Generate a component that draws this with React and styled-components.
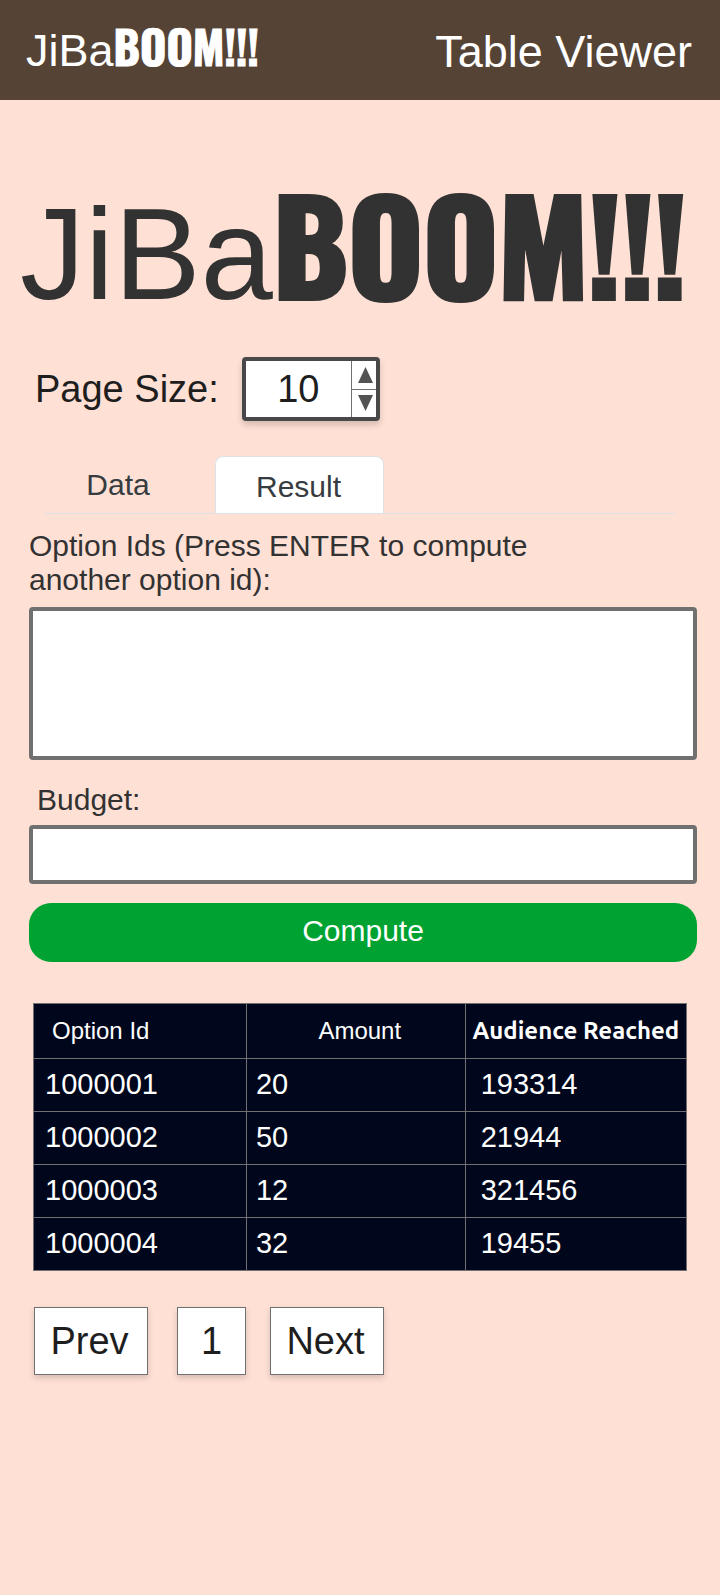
import React, { useState } from "react";
import styled, { createGlobalStyle } from "styled-components";

const GlobalStyle = createGlobalStyle`
  *, *::before, *::after { box-sizing: border-box; }
  body {
    margin: 0;
    background: #fee0d5;
    color: #323232;
    font-family: "Liberation Sans", Arial, sans-serif;
  }
  button, input, textarea { font-family: inherit; margin: 0; }
`;

const Page = styled.div`
  min-height: 100vh;
`;

const Header = styled.header`
  display: flex;
  align-items: center;
  justify-content: space-between;
  height: 100px;
  padding: 0 28px 0 26px;
  background: #554436;
  color: #fff;
`;

const HeaderTitle = styled.span`
  font-size: 45px;
  line-height: 48px;
  padding-top: 4px;
`;

const Wordmark = styled.span`
  display: block;
  font-size: ${(p) => p.$size}px;
  line-height: ${(p) => p.$size}px;
  white-space: nowrap;
`;

const Boom = styled.strong`
  font-family: Impact, Oswald, "Liberation Sans", sans-serif;
  font-size: ${(p) => p.$size}px;
  font-weight: 700;
  line-height: 0;
  -webkit-text-stroke: ${(p) => p.$stroke}px currentColor;
`;

const Hero = styled.h1`
  margin: 0;
  padding: 89px 0 0 20px;
  font-weight: 400;
`;

const Main = styled.main`
  padding: 38px 23px 40px 29px;
`;

const PageSize = styled.div`
  display: flex;
  align-items: center;
  gap: 23px;
  padding-left: 6px;
  font-size: 38px;
  color: #1e1e1e;
`;

const Stepper = styled.div`
  display: flex;
  width: 138px;
  height: 64px;
  border: 4px solid #484848;
  border-radius: 4px;
  background: #fff;
  box-shadow: 0 4px 6px rgba(0, 0, 0, 0.16);
`;

const StepperInput = styled.input`
  flex: 1;
  min-width: 0;
  padding: 0;
  border: 0;
  background: transparent;
  color: #1e1e1e;
  font-size: 38px;
  text-align: center;
  appearance: textfield;
  &::-webkit-inner-spin-button { appearance: none; margin: 0; }
`;

const StepperButtons = styled.div`
  display: flex;
  flex-direction: column;
  width: 25px;
  border-left: 1px solid #707070;
`;

const StepButton = styled.button`
  display: flex;
  flex: 1;
  align-items: center;
  justify-content: center;
  padding: 0 0 0 3px;
  border: 0;
  background: transparent;
  & + & { border-top: 1px solid #707070; }
`;

const Tabs = styled.div`
  display: flex;
  height: 58px;
  margin: 35px 22px 0 16px;
  border-bottom: 1px solid #dee2e6;
`;

const Tab = styled.button`
  width: 169px;
  padding: 4px 2px 0 0;
  border: 1px solid ${(p) => (p.$active ? "#dee2e6" : "transparent")};
  border-bottom: 0;
  border-radius: 8px 8px 0 0;
  background: ${(p) => (p.$active ? "#fff" : "transparent")};
  color: #373c41;
  font-size: 30px;
`;

const FirstTab = styled(Tab)`
  width: 170px;
  padding: 0 24px 0 0;
`;

const Field = styled.div`
  margin-top: ${(p) => p.$top}px;
`;

const Label = styled.label`
  display: block;
  max-width: 540px;
  padding-left: ${(p) => p.$indent || 0}px;
  margin-bottom: ${(p) => p.$gap}px;
  font-size: 30px;
  line-height: 34px;
`;

const TextArea = styled.textarea`
  display: block;
  width: 100%;
  height: 153px;
  padding: 8px 12px;
  border: 4px solid #707070;
  border-radius: 4px;
  background: #fff;
  font-size: 30px;
  resize: none;
`;

const TextInput = styled.input`
  display: block;
  width: 100%;
  height: 59px;
  padding: 0 12px;
  border: 4px solid #707070;
  border-radius: 4px;
  background: #fff;
  font-size: 30px;
`;

const ComputeButton = styled.button`
  display: block;
  width: 100%;
  height: 59px;
  margin-top: 19px;
  padding: 0 0 4px;
  border: 0;
  border-radius: 22px;
  background: #00a331;
  color: #fff;
  font-size: 30px;
`;

const TableWrap = styled.div`
  margin: 41px 10px 0 4px;
`;

const Table = styled.table`
  width: 100%;
  table-layout: fixed;
  border-collapse: collapse;
  background: #00071d;
  color: #fff;
`;

const HeadCell = styled.th`
  width: ${(p) => p.$width};
  height: 55px;
  padding: 0 0 0 ${(p) => p.$pad || 0}px;
  border: 1px solid #707070;
  text-align: ${(p) => p.$align || "center"};
  font-family: ${(p) => (p.$strong ? 'Ubuntu, "Noto Sans", sans-serif' : "inherit")};
  font-size: 24px;
  font-weight: ${(p) => (p.$strong ? 700 : 400)};
  line-height: 28px;
  white-space: nowrap;
`;

const Cell = styled.td`
  height: 53px;
  padding: 0 0 2px ${(p) => p.$pad}px;
  border: 1px solid #707070;
  font-size: 29px;
  line-height: 32px;
`;

const Pager = styled.nav`
  display: flex;
  gap: 24px;
  margin: 36px 0 0 5px;
`;

const PagerButton = styled.button`
  width: 114px;
  height: 68px;
  padding: 0 3px 0 0;
  border: 1px solid #707070;
  background: #fff;
  box-shadow: 0 3px 6px rgba(0, 0, 0, 0.16);
  color: #1e1e1e;
  font-size: 38px;
`;

const PageNumber = styled(PagerButton)`
  width: 69px;
  margin-left: 5px;
  padding: 0;
`;

const rows = [
  ["1000001", "20", "193314"],
  ["1000002", "50", "21944"],
  ["1000003", "12", "321456"],
  ["1000004", "32", "19455"],
];
const cellPads = [11, 9, 15];

function Arrow({ down }) {
  return (
    <svg width="15" height="16" viewBox="0 0 15 16" aria-hidden="true">
      <path d={down ? "M0 0H15L7.5 16Z" : "M7.5 0L15 16H0Z"} fill="#535353" />
    </svg>
  );
}

function Logo({ size, boomSize, stroke }) {
  return (
    <Wordmark $size={size}>
      JiBa
      <Boom $size={boomSize} $stroke={stroke}>BOOM!!!</Boom>
    </Wordmark>
  );
}

export default function App() {
  const [size, setSize] = useState(10);
  const [tab, setTab] = useState("result");
  return (
    <Page>
      <GlobalStyle />
      <Header>
        <Logo size={45} boomSize={45} stroke={1} />
        <HeaderTitle>Table Viewer</HeaderTitle>
      </Header>
      <Hero>
        <Logo size={130} boomSize={128} stroke={4} />
      </Hero>
      <Main>
        <PageSize>
          <label htmlFor="page-size">Page Size:</label>
          <Stepper>
            <StepperInput
              id="page-size"
              type="number"
              value={size}
              onChange={(e) => setSize(Number(e.target.value))}
            />
            <StepperButtons>
              <StepButton type="button" aria-label="Increase" onClick={() => setSize(size + 1)}>
                <Arrow />
              </StepButton>
              <StepButton type="button" aria-label="Decrease" onClick={() => setSize(size - 1)}>
                <Arrow down />
              </StepButton>
            </StepperButtons>
          </Stepper>
        </PageSize>
        <Tabs role="tablist">
          <FirstTab type="button" role="tab" aria-selected={tab === "data"} $active={tab === "data"} onClick={() => setTab("data")}>
            Data
          </FirstTab>
          <Tab type="button" role="tab" aria-selected={tab === "result"} $active={tab === "result"} onClick={() => setTab("result")}>
            Result
          </Tab>
        </Tabs>
        <Field $top={15}>
          <Label htmlFor="option-ids" $gap={10}>
            Option Ids (Press ENTER to compute another option id):
          </Label>
          <TextArea id="option-ids" />
        </Field>
        <Field $top={23}>
          <Label htmlFor="budget" $gap={8} $indent={8}>Budget:</Label>
          <TextInput id="budget" type="text" />
        </Field>
        <ComputeButton type="button">Compute</ComputeButton>
        <TableWrap>
          <Table>
            <thead>
              <tr>
                <HeadCell $width="32.6%" $align="left" $pad={18}>Option Id</HeadCell>
                <HeadCell $width="33.5%" $pad={8}>Amount</HeadCell>
                <HeadCell $strong>Audience Reached</HeadCell>
              </tr>
            </thead>
            <tbody>
              {rows.map((row) => (
                <tr key={row[0]}>
                  {row.map((value, i) => (
                    <Cell key={i} $pad={cellPads[i]}>{value}</Cell>
                  ))}
                </tr>
              ))}
            </tbody>
          </Table>
        </TableWrap>
        <Pager aria-label="Pages">
          <PagerButton type="button">Prev</PagerButton>
          <PageNumber type="button">1</PageNumber>
          <PagerButton type="button">Next</PagerButton>
        </Pager>
      </Main>
    </Page>
  );
}
